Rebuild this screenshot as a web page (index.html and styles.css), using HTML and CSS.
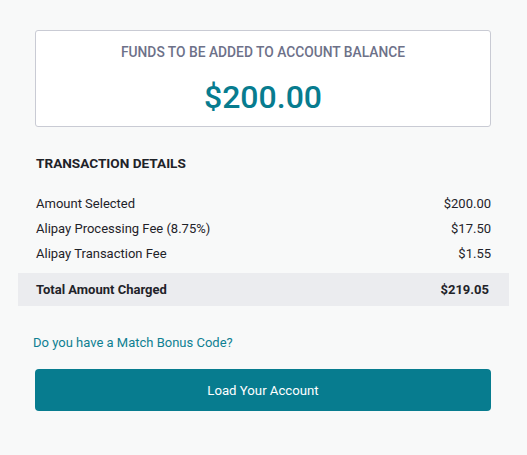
FILE: index.html
```html
<!DOCTYPE html>
<html>
<head>
<meta charset="utf-8">
<link rel="stylesheet" href="styles.css">
</head>
<body>
<div class="page">
  <div class="summary">
    <div class="summary-title">FUNDS TO BE ADDED TO ACCOUNT BALANCE</div>
    <div class="summary-amount">$200.00</div>
  </div>
  <h2 class="section-title">TRANSACTION DETAILS</h2>
  <div class="details">
    <div class="row"><span>Amount Selected</span><span>$200.00</span></div>
    <div class="row"><span>Alipay Processing Fee (8.75%)</span><span>$17.50</span></div>
    <div class="row"><span>Alipay Transaction Fee</span><span>$1.55</span></div>
    <div class="row total"><span>Total Amount Charged</span><span>$219.05</span></div>
  </div>
  <a class="bonus-link" href="#">Do you have a Match Bonus Code?</a>
  <button class="load-btn">Load Your Account</button>
</div>
</body>
</html>
```
FILE: styles.css
```css
html, body {
  margin: 0;
  padding: 0;
  background: #f8f9f9;
  font-family: Roboto, "Liberation Sans", sans-serif;
  color: #1f2329;
}
.page {
  width: 456px;
  margin-left: 35px;
  padding-top: 30px;
  display: flex;
  flex-direction: column;
}
.summary {
  background: #ffffff;
  border: 1px solid #c9cbd4;
  border-radius: 3px;
  box-sizing: border-box;
  height: 97px;
  display: flex;
  flex-direction: column;
  align-items: center;
  padding-top: 13px;
}
.summary-title {
  font-size: 13.8px;
  font-weight: 500;
  color: #6d7189;
  line-height: 16px;
}
.summary-amount {
  font-size: 32px;
  font-weight: 500;
  color: #077c8f;
  line-height: 38px;
  margin-top: 18px;
}
.section-title {
  font-size: 13.6px;
  font-weight: 700;
  margin: 28px 0 0 1px;
  line-height: 16px;
}
.details {
  margin-top: 20px;
  display: flex;
  flex-direction: column;
}
.row {
  display: flex;
  justify-content: space-between;
  font-size: 13px;
  line-height: 16px;
  padding: 4.5px 0 4.5px 1px;
}
.total {
  margin: 7px -18px 0 -17px;
  padding: 9px 20px 8px 18px;
  background: #ebecef;
  font-weight: 700;
}
.bonus-link {
  margin: 29px 0 0 -2px;
  font-size: 13px;
  line-height: 16px;
  color: #0e7f92;
  text-decoration: none;
}
.load-btn {
  margin-top: 18px;
  height: 42px;
  border: none;
  border-radius: 4px;
  background: #077c8f;
  color: #ffffff;
  font-family: Roboto, "Liberation Sans", sans-serif;
  font-size: 13.2px;
  font-weight: 400;
}
```
